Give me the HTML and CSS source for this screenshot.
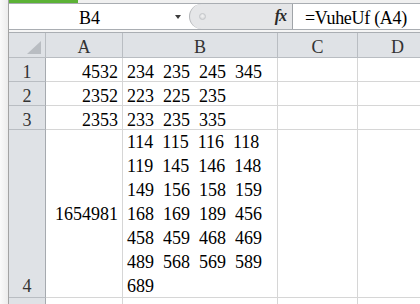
FILE: index.html
```html
<!DOCTYPE html>
<html>
<head>
<meta charset="utf-8">
<link rel="stylesheet" href="styles.css">
</head>
<body>
<div class="app">
  <div class="edge"></div>
  <div class="main">
    <div class="topstrip"><div class="green"></div></div>
    <div class="fbar">
      <div class="namebox"><span class="nbtext">B4</span><span class="arrow"></span></div>
      <div class="mid"><span class="knob"></span><span class="fx">fx</span></div>
      <div class="formula">=VuheUf (A4)</div>
    </div>
    <div class="gap"></div>
    <div class="sheet">
      <div class="hd corner"><span class="tri"></span></div>
      <div class="hd col">A</div>
      <div class="hd col">B</div>
      <div class="hd col">C</div>
      <div class="hd col">D</div>

      <div class="hd row">1</div>
      <div class="c num">4532</div>
      <div class="c txt">234 235 245 345</div>
      <div class="c"></div>
      <div class="c"></div>

      <div class="hd row">2</div>
      <div class="c num">2352</div>
      <div class="c txt">223 225 235</div>
      <div class="c"></div>
      <div class="c"></div>

      <div class="hd row">3</div>
      <div class="c num">2353</div>
      <div class="c txt">233 235 335</div>
      <div class="c"></div>
      <div class="c"></div>

      <div class="hd row row4">4</div>
      <div class="c num mid4">1654981</div>
      <div class="c wrap">114 115 116 118<br>119 145 146 148<br>149 156 158 159<br>168 169 189 456<br>458 459 468 469<br>489 568 569 589<br>689</div>
      <div class="c"></div>
      <div class="c"></div>

      <div class="hd row"></div>
      <div class="c"></div>
      <div class="c"></div>
      <div class="c"></div>
      <div class="c"></div>
    </div>
  </div>
</div>
</body>
</html>
```

FILE: styles.css
```css
* { box-sizing: border-box; }
html, body { margin: 0; padding: 0; background: #ffffff; }
body { width: 420px; height: 304px; overflow: hidden; font-family: "Liberation Serif", "Times New Roman", serif; }

.app { display: flex; width: 420px; height: 304px; overflow: hidden; }
.edge { width: 9px; flex: none; background: linear-gradient(to right, #fafafa, #ececec); border-right: 1px solid #a3a3a3; }
.main { flex: 1; overflow: hidden; display: flex; flex-direction: column; }

.topstrip { height: 3px; background: #f0f0f0; flex: none; }
.green { width: 69px; height: 3px; background: #5cb236; }

.fbar { display: flex; height: 27px; flex: none; border-top: 1px solid #a9adb2; border-bottom: 1px solid #a9adb2; background: #ffffff; }
.namebox { width: 180px; display: flex; background: #ffffff; }
.nbtext { width: 161px; text-align: center; font-size: 18px; line-height: 21px; padding-top: 4px; color: #000; }
.arrow { width: 0; height: 0; margin-left: 5px; margin-top: 11px; border-left: 3.5px solid transparent; border-right: 3.5px solid transparent; border-top: 4px solid #3c3c3c; }
.mid { width: 103px; display: flex; background: #e5e6e8; border-radius: 13px 0 0 13px; border-left: 1px solid #b4b6b9; }
.knob { width: 7px; height: 7px; margin-left: 9px; margin-top: 9px; border-radius: 50%; background: radial-gradient(circle at 50% 40%, #f4f4f4, #cfd1d4); border: 1px solid #c4c6c9; }
.fx { margin-left: auto; margin-right: 6px; font-size: 16px; font-style: italic; font-weight: bold; line-height: 20px; padding-top: 2px; color: #2a2a2a; letter-spacing: -1px; }
.formula { flex: 1; border-left: 1px solid #a0a4a8; padding-left: 12px; font-size: 18px; line-height: 21px; padding-top: 4px; color: #000; white-space: nowrap; letter-spacing: -0.3px; }

.gap { height: 3px; flex: none; background: #f5f5f5; border-bottom: 1px solid #aaaeb3; }

.sheet { display: grid; width: max-content; grid-template-columns: 37px 77px 155px 80px 80px; grid-template-rows: 25px 24px 24px 24px 168px 24px; font-size: 18px; color: #000; }

.hd { background: #dfe2e6; color: #333; border-right: 1px solid #b9bdc2; border-bottom: 1px solid #b9bdc2; display: flex; flex-direction: column; justify-content: flex-end; align-items: center; line-height: 18px; padding-bottom: 1px; }
.corner { position: relative; }
.tri { position: absolute; right: 4px; bottom: 3px; width: 0; height: 0; border-left: 14px solid transparent; border-bottom: 13px solid #b9bdc2; }
.row { border-right-color: #a6aaaf; padding-bottom: 0; }
.row4 { padding-bottom: 2px; }

.c { border-right: 1px solid #d6d6d6; border-bottom: 1px solid #d6d6d6; display: flex; flex-direction: column; justify-content: flex-end; line-height: 18px; padding: 0 4px; white-space: nowrap; word-spacing: 4.5px; }
.num { align-items: flex-end; }
.mid4 { justify-content: center; line-height: 24px; }
.wrap { justify-content: flex-start; line-height: 24px; }
```
